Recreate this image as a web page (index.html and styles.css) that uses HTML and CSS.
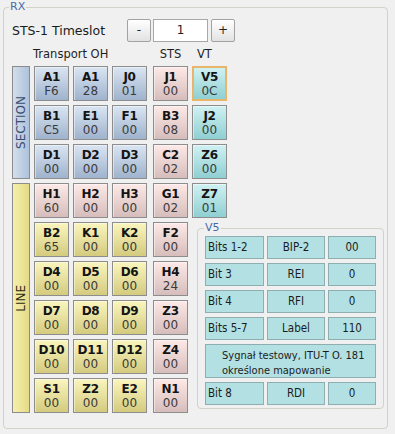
FILE: index.html
```html
<!DOCTYPE html>
<html>
<head>
<meta charset="utf-8">
<link rel="stylesheet" href="styles.css">
</head>
<body>
<fieldset class="rx">
  <legend>RX</legend>
  <div class="ts-row">
    <span class="ts-label">STS-1 Timeslot</span>
    <div class="spin">
      <div class="btn">-</div>
      <div class="ts-input">1</div>
      <div class="btn">+</div>
    </div>
  </div>
  <div class="grid">
    <div class="hdr h-toh">Transport OH</div>
    <div class="hdr h-sts">STS</div>
    <div class="hdr h-vt">VT</div>

    <div class="bar bar-sec"><span>SECTION</span></div>
    <div class="bar bar-line"><span>LINE</span></div>

    <fieldset class="v5">
      <legend>V5</legend>
      <div class="v5-grid">
        <div class="vc left">Bits 1-2</div><div class="vc">BIP-2</div><div class="vc">00</div>
        <div class="vc left">Bit 3</div><div class="vc">REI</div><div class="vc">0</div>
        <div class="vc left">Bit 4</div><div class="vc">RFI</div><div class="vc">0</div>
        <div class="vc left">Bits 5-7</div><div class="vc">Label</div><div class="vc">110</div>
        <div class="vc wide">Sygnał testowy, ITU-T O. 181<br>określone mapowanie</div>
        <div class="vc left">Bit 8</div><div class="vc">RDI</div><div class="vc">0</div>
      </div>
    </fieldset>

    <div class="cell blue"><b>A1</b><span>F6</span></div>
    <div class="cell blue"><b>A1</b><span>28</span></div>
    <div class="cell blue"><b>J0</b><span>01</span></div>
    <div class="cell pink"><b>J1</b><span>00</span></div>
    <div class="cell teal sel"><b>V5</b><span>0C</span></div>

    <div class="cell blue"><b>B1</b><span>C5</span></div>
    <div class="cell blue"><b>E1</b><span>00</span></div>
    <div class="cell blue"><b>F1</b><span>00</span></div>
    <div class="cell pink"><b>B3</b><span>08</span></div>
    <div class="cell teal"><b>J2</b><span>00</span></div>

    <div class="cell blue"><b>D1</b><span>00</span></div>
    <div class="cell blue"><b>D2</b><span>00</span></div>
    <div class="cell blue"><b>D3</b><span>00</span></div>
    <div class="cell pink"><b>C2</b><span>02</span></div>
    <div class="cell teal"><b>Z6</b><span>00</span></div>

    <div class="cell pink"><b>H1</b><span>60</span></div>
    <div class="cell pink"><b>H2</b><span>00</span></div>
    <div class="cell pink"><b>H3</b><span>00</span></div>
    <div class="cell pink"><b>G1</b><span>02</span></div>
    <div class="cell teal"><b>Z7</b><span>01</span></div>

    <div class="cell yellow"><b>B2</b><span>65</span></div>
    <div class="cell yellow"><b>K1</b><span>00</span></div>
    <div class="cell yellow"><b>K2</b><span>00</span></div>
    <div class="cell pink"><b>F2</b><span>00</span></div>

    <div class="cell yellow"><b>D4</b><span>00</span></div>
    <div class="cell yellow"><b>D5</b><span>00</span></div>
    <div class="cell yellow"><b>D6</b><span>00</span></div>
    <div class="cell pink"><b>H4</b><span>24</span></div>

    <div class="cell yellow"><b>D7</b><span>00</span></div>
    <div class="cell yellow"><b>D8</b><span>00</span></div>
    <div class="cell yellow"><b>D9</b><span>00</span></div>
    <div class="cell pink"><b>Z3</b><span>00</span></div>

    <div class="cell yellow"><b>D10</b><span>00</span></div>
    <div class="cell yellow"><b>D11</b><span>00</span></div>
    <div class="cell yellow"><b>D12</b><span>00</span></div>
    <div class="cell pink"><b>Z4</b><span>00</span></div>

    <div class="cell yellow"><b>S1</b><span>00</span></div>
    <div class="cell yellow"><b>Z2</b><span>00</span></div>
    <div class="cell yellow"><b>E2</b><span>00</span></div>
    <div class="cell pink"><b>N1</b><span>00</span></div>
  </div>
</fieldset>
</body>
</html>
```

FILE: styles.css
```css
* { box-sizing: border-box; }
html, body { margin: 0; padding: 0; }
body {
  background: #f0f0f0;
  font-family: "DejaVu Sans", "Liberation Sans", sans-serif;
  color: #1e1e1e;
  width: 395px;
  height: 434px;
  overflow: hidden;
}

.rx {
  margin: 0 0 0 3px;
  width: 385px;
  padding: 4px 3px 15px 8px;
  border: 1px solid #d2d2c8;
  border-radius: 4px;
  min-width: 0;
}
.rx > legend {
  font-size: 11px;
  line-height: 14px;
  color: #4a68a8;
  padding: 0 1px;
  margin-left: -3px;
}

.ts-row {
  display: flex;
  align-items: center;
  height: 24px;
}
.ts-label {
  width: 115px;
  font-size: 12.5px;
  color: #1a1a1a;
}
.spin {
  display: flex;
  align-items: center;
}
.btn {
  width: 24px;
  height: 23px;
  border: 1px solid #a2a2a2;
  border-radius: 2px;
  background: linear-gradient(#ffffff, #e2e2e2);
  font-size: 12px;
  line-height: 21px;
  text-align: center;
  color: #222;
}
.ts-input {
  width: 55px;
  height: 23px;
  margin: 0 3px 0 2px;
  border: 1px solid #a8a8a8;
  background: #fff;
  font-size: 12px;
  line-height: 21px;
  text-align: center;
  color: #222;
}

.grid {
  display: grid;
  grid-template-columns: 18px 35px 35px 37px 35px 1fr;
  grid-template-rows: 20px repeat(9, 35px);
  column-gap: 4px;
  row-gap: 4px;
}
.hdr {
  font-size: 11.5px;
  line-height: 14px;
  padding-top: 5px;
  color: #1e1e1e;
  white-space: nowrap;
}
.h-toh { grid-column: 1 / 5; grid-row: 1; padding-left: 21px; }
.h-sts { grid-column: 5; grid-row: 1; text-align: center; }
.h-vt  { grid-column: 6; grid-row: 1; padding-left: 5px; }

.bar {
  grid-column: 1;
  border: 1px solid #8c8c8c;
  display: flex;
  align-items: center;
  justify-content: center;
}
.bar span {
  writing-mode: vertical-rl;
  transform: rotate(180deg);
  font-size: 12px;
  white-space: nowrap;
}
.bar-sec {
  grid-row: 2 / 5;
  background: linear-gradient(90deg, #d2deec, #aec2da);
}
.bar-sec span { color: #3a4c72; }
.bar-line {
  grid-row: 5 / 11;
  background: linear-gradient(90deg, #f6f0ad, #e4da86);
}
.bar-line span { color: #2c2a10; }

.cell {
  width: 35px;
  height: 35px;
  border: 1px solid #8d8d8d;
  display: flex;
  flex-direction: column;
  align-items: center;
  padding-top: 3px;
  box-shadow: inset 1px 1px 0 rgba(255,255,255,0.45);
}
.cell b {
  font-size: 12px;
  line-height: 14px;
  font-weight: bold;
  color: #141414;
  letter-spacing: -0.3px;
}
.cell span {
  font-size: 12px;
  line-height: 14px;
  color: #3a3a3a;
}
.blue   { background: linear-gradient(#dae5f2, #9fb3cd); }
.pink   { background: linear-gradient(#fde9e7, #d6bdbb); }
.teal   { background: linear-gradient(#d0f1f2, #8fcfd2); }
.yellow { background: linear-gradient(#faf5bd, #d4cb7f); }
.sel {
  border: 2px solid #e8b56c;
  padding-top: 2px;
  box-shadow: none;
}

.v5 {
  grid-column: 6;
  grid-row: 6 / 11;
  align-self: start;
  margin: -1px 0 0 5px;
  padding: 1px 7px 3px 7px;
  border: 1px solid #d2d2c8;
  border-radius: 4px;
  min-width: 0;
}
.v5 > legend {
  font-size: 11px;
  line-height: 14px;
  color: #4a68a8;
  padding: 0 1px;
  margin-left: -1px;
}
.v5-grid {
  display: grid;
  grid-template-columns: 59px 58px 48px;
  grid-template-rows: 23px 23px 23px 23px 34px 23px;
  column-gap: 3px;
  row-gap: 4px;
}
.vc {
  background: #b2e0e3;
  border: 1px solid #8eaeb0;
  font-family: "DejaVu Sans Condensed", "DejaVu Sans", sans-serif;
  font-size: 11.5px;
  line-height: 21px;
  text-align: center;
  color: #1c1c1c;
  white-space: nowrap;
}
.vc.left { text-align: left; padding-left: 2px; }
.vc.wide {
  grid-column: 1 / 4;
  text-align: left;
  font-size: 11px;
  line-height: 15px;
  padding: 3px 0 0 16px;
}
```
